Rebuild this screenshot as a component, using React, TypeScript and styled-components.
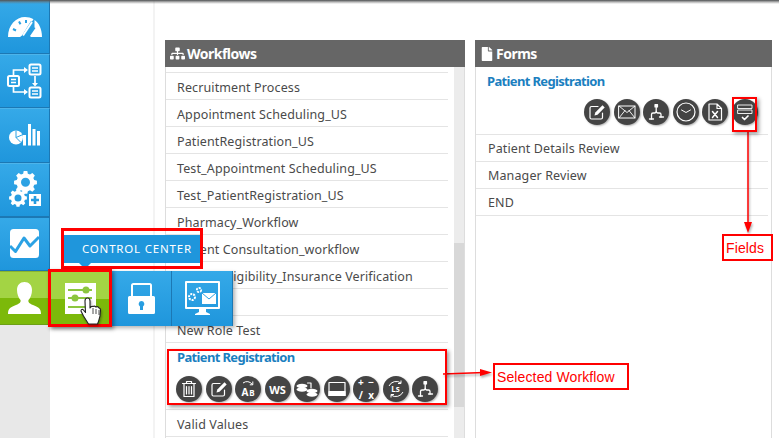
import React from 'react';
import styled, { createGlobalStyle } from 'styled-components';
import { FaSitemap, FaFile } from 'react-icons/fa';

const GlobalStyle = createGlobalStyle`
  html, body { margin: 0; padding: 0; background: #fff; }
  * { box-sizing: border-box; }
`;

const FONT = `"Noto Sans", "Open Sans", sans-serif`;

const workflowRows = [
  'Recruitment Process',
  'Appointment Scheduling_US',
  'PatientRegistration_US',
  'Test_Appointment Scheduling_US',
  'Test_PatientRegistration_US',
  'Pharmacy_Workflow',
  'Patient Consultation_workflow',
  'Patient Eligibility_Insurance Verification',
  'Test Role',
  'New Role Test',
];

const formRows = ['Patient Details Review', 'Manager Review', 'END'];

const Glyph = ({ children }: { children: React.ReactNode }) => (
  <svg width="26" height="26" viewBox="0 0 26 26" fill="none" stroke="#fff" strokeWidth="1.2" strokeLinecap="round" strokeLinejoin="round">
    {children}
  </svg>
);

const TrashGlyph = () => (
  <Glyph>
    <path d="M6.5 7.500h13M10.500 7.500V5.500h5v2M8 8v12.500h10V8M10.500 10.500v7.500M13 10.500v7.500M15.500 10.500v7.500" />
  </Glyph>
);
const EditGlyph = () => (
  <Glyph>
    <path d="M18.500 14v4.500q0 1.500-1.500 1.500H7.500Q6 20 6 18.500V9q0-1.500 1.500-1.500H14" />
    <path d="M10.500 16.500l.8-3 7.200-7.200 2.200 2.200-7.200 7.200z" fill="#fff" stroke="none" />
  </Glyph>
);
const FlowGlyph = () => (
  <Glyph>
    <rect x="12" y="5.500" width="2.500" height="2.500" fill="#fff" />
    <path d="M13.200 8v3.500M8.500 20v-4.500q0-1.500 1.500-1.500h1.500q1.700 0 1.700-2.500 0 2.500 1.700 2.500h1.600q1.500 0 1.500 1.500V18" strokeWidth="1.300" />
    <path d="M6.500 20h4M16.500 18h4" strokeWidth="1.300" />
  </Glyph>
);
const DataGlyph = () => (
  <Glyph>
    <ellipse cx="8" cy="10" rx="5.500" ry="2.200" fill="#fff" stroke="none" />
    <ellipse cx="8" cy="13.500" rx="5.500" ry="2.200" fill="#fff" stroke="none" />
    <ellipse cx="18" cy="15" rx="5.500" ry="2.200" fill="#fff" stroke="none" />
    <ellipse cx="18" cy="18.500" rx="5.500" ry="2.200" fill="#fff" stroke="none" />
    <path d="M13.500 7h3.500v5" />
  </Glyph>
);
const PanelGlyph = () => (
  <Glyph>
    <rect x="5" y="6.500" width="16" height="13" stroke="#fff" />
    <rect x="5" y="15.500" width="16" height="4" fill="#fff" />
  </Glyph>
);
const MailGlyph = () => (
  <Glyph>
    <rect x="5" y="7" width="16" height="12" strokeWidth="1" />
    <path d="M5 7l8 6.500L21 7M5 19l6-7.500M21 19l-6-7.500" strokeWidth=".9" />
  </Glyph>
);
const ClockGlyph = () => (
  <Glyph>
    <circle cx="13" cy="13" r="9" />
    <path d="M8.500 11l4.500 2.500 4.500-2.500" strokeWidth="1" />
  </Glyph>
);
const ExcelGlyph = () => (
  <Glyph>
    <path d="M7 5h8l4.500 4.500V21H7zM15 5v4.500h4.500" />
    <path d="M10.500 12.500l5 6M15.500 12.500l-5 6" strokeWidth="1.500" />
  </Glyph>
);
const FieldsGlyph = () => (
  <Glyph>
    <rect x="6" y="6" width="14" height="3.500" strokeWidth=".9" />
    <rect x="6" y="11" width="14" height="3.500" strokeWidth=".9" />
    <path d="M10.500 18.500l2 2 3.500-3.500" strokeWidth="1.700" />
  </Glyph>
);
const RefreshRing = () => (
  <RingSvg width="26" height="26" viewBox="0 0 26 26" fill="none" stroke="#fff" strokeWidth="1">
    <path d="M6 10a8 8 0 0 1 12-3M20 16a8 8 0 0 1-12 3" />
    <path d="M18 4.500V7.500H15M8 21.500V18.500h3" />
  </RingSvg>
);
const SwapArc = () => (
  <RingSvg width="26" height="26" viewBox="0 0 26 26" fill="none" stroke="#fff" strokeWidth="1">
    <path d="M8 7q5-3.500 9.500 1.500M17.800 5.500v3.300h-3" />
  </RingSvg>
);

const RingSvg = styled.svg`
  position: absolute;
  left: 0;
  top: 0;
`;

const Scene = styled.div`
  position: relative;
  display: flex;
  width: 779px;
  height: 438px;
  overflow: hidden;
  background: #fff;
  font-family: ${FONT};
`;

const TopShade = styled.div`
  position: absolute;
  top: 0;
  left: 0;
  right: 0;
  height: 4px;
  background: linear-gradient(#4d5052, rgba(110, 110, 110, 0.5) 50%, rgba(255, 255, 255, 0));
  z-index: 5;
`;

const Sidebar = styled.nav`
  display: flex;
  flex-direction: column;
  width: 50px;
  flex: none;
  background: #e8e8e8;
`;

const Tile = styled.div<{ $green?: boolean; $active?: boolean }>`
  display: flex;
  align-items: center;
  justify-content: center;
  width: 50px;
  height: 54.2px;
  flex: none;
  border-right: 1px solid ${(p) => (p.$green ? '#6c9f16' : '#1c78b4')};
  border-bottom: 1px solid ${(p) => (p.$green ? '#6c9f16' : '#1c78b4')};
  border-top: 1px solid ${(p) => (p.$green ? '#8ab52e' : p.$active ? '#1c78b4' : '#4db4ea')};
  background: ${(p) =>
    p.$green
      ? 'linear-gradient(#a3d444 0, #a3d444 50%, #7cb90a 50%, #7cb90a 100%)'
      : 'linear-gradient(#35a9e8, #1f96dc)'};
`;

const Rail = styled.div`
  width: 105px;
  flex: none;
  border-right: 2px solid #f3f3f3;
`;

const Content = styled.main`
  display: flex;
  gap: 10px;
  padding: 40px 0 0 10px;
  flex: 1;
  min-width: 0;
`;

const Panel = styled.section<{ $width: number }>`
  display: flex;
  flex-direction: column;
  width: ${(p) => p.$width}px;
  flex: none;
  overflow: hidden;
`;

const PanelHeader = styled.header`
  display: flex;
  align-items: center;
  gap: 2px;
  height: 27px;
  flex: none;
  padding-left: 5px;
  background: #666;
  color: #fff;
  font-size: 14px;
  font-weight: 700;
  letter-spacing: -0.5px;
`;

const PanelBody = styled.div`
  display: flex;
  flex: 1;
  min-height: 0;
  border-left: 1px solid #ddd;
  border-right: 1px solid #ddd;
`;

const List = styled.div<{ $inset: number; $pad: number; $rowTop: number }>`
  flex: 1;
  min-width: 0;
  margin-right: ${(p) => p.$inset}px;
  --row-pad: ${(p) => p.$pad}px;
  --row-top: ${(p) => p.$rowTop}px;
`;

const TopGap = styled.div`
  height: 6px;
  border-bottom: 1px solid #e4e4e4;
`;

const Row = styled.div`
  display: flex;
  align-items: center;
  height: 27px;
  padding: var(--row-top) 0 0 var(--row-pad);
  border-bottom: 1px solid #e4e4e4;
  color: #4a4a4a;
  font-size: 12.5px;
  letter-spacing: 0.12px;
  white-space: nowrap;
`;

const SelectedRow = styled.div`
  height: 67px;
  padding: 5px 0 0 11px;
  border-bottom: 1px solid #e4e4e4;
`;

const FormHead = styled.div`
  height: 68px;
  padding: 5px 0 0 11px;
  border-bottom: 1px solid #e4e4e4;
`;

const Title = styled.div`
  color: #1b80bf;
  font-size: 13px;
  font-weight: 700;
  letter-spacing: -0.65px;
  line-height: 19px;
`;

const IconRow = styled.div<{ $end?: boolean }>`
  display: flex;
  gap: 3.5px;
  margin-top: ${(p) => (p.$end ? 8 : 9)}px;
  margin-left: ${(p) => (p.$end ? 97 : -1)}px;
`;

const RoundIcon = styled.span`
  position: relative;
  display: flex;
  flex-wrap: wrap;
  align-items: center;
  justify-content: center;
  width: 26px;
  height: 26px;
  flex: none;
  border-radius: 50%;
  background: #444;
  color: #fff;
  font-size: 11px;
  font-weight: 700;
  line-height: 1;
  box-shadow: 1px 1px 2px rgba(0, 0, 0, 0.3);
`;

const SmallMark = styled.span`
  font-size: 8px;
  font-weight: 700;
`;

const LetterPair = styled.span`
  display: flex;
  align-items: flex-end;
  gap: 1px;
  margin-top: 5px;
  font-size: 10px;
`;

const MathCell = styled.span`
  width: 10.500px;
  text-align: center;
  font-size: 10px;
  line-height: 9px;
`;

const Scrollbar = styled.div`
  display: flex;
  flex-direction: column;
  width: 10px;
  flex: none;
  background: #ececec;
`;

const ScrollThumb = styled.div`
  width: 100%;
  height: 164px;
  margin-top: 176px;
  background: #d8d8d8;
`;

const Flyout = styled.div`
  position: absolute;
  left: 50px;
  top: 271px;
  display: flex;
  height: 55px;
  box-shadow: 2px 2px 4px rgba(0, 0, 0, 0.3);
  z-index: 6;
`;

const FlyTile = styled.div<{ $green?: boolean; $width: number }>`
  display: flex;
  align-items: center;
  justify-content: center;
  position: relative;
  width: ${(p) => p.$width}px;
  background: ${(p) =>
    p.$green
      ? 'linear-gradient(#a3d444 0, #a3d444 50%, #7cb90a 50%, #7cb90a 100%)'
      : 'linear-gradient(#35a9e8, #1f96dc)'};
  border-right: 1px solid ${(p) => (p.$green ? '#6c9f16' : '#1c78b4')};
`;

const Tooltip = styled.div`
  position: absolute;
  left: 62px;
  top: 235px;
  width: 141px;
  height: 28px;
  padding-left: 20px;
  background: #1f96dc;
  color: #fff;
  font-size: 11.5px;
  letter-spacing: 0.8px;
  line-height: 28px;
  white-space: nowrap;
  z-index: 6;
  &::after {
    content: '';
    position: absolute;
    left: 17px;
    bottom: -6px;
    border-left: 6px solid transparent;
    border-right: 6px solid transparent;
    border-top: 6px solid #1f96dc;
  }
`;

const RedBox = styled.div<{ $x: number; $y: number; $w: number; $h: number; $shadow?: boolean }>`
  position: absolute;
  left: ${(p) => p.$x}px;
  top: ${(p) => p.$y}px;
  width: ${(p) => p.$w}px;
  height: ${(p) => p.$h}px;
  border: 2px solid #f00;
  ${(p) => (p.$shadow ? 'box-shadow: 2px 2px 4px rgba(0,0,0,.4);' : '')}
  z-index: 8;
`;

const ThickBox = styled(RedBox)`
  border-width: 3px;
`;

const Label = styled(RedBox)`
  display: flex;
  align-items: center;
  padding-left: 2px;
  background: #fff;
  color: #f00;
  font-family: "Liberation Sans", Arial, sans-serif;
  font-size: 14px;
  letter-spacing: 0.12px;
  white-space: nowrap;
`;

const ArrowLayer = styled.svg<{ $top?: boolean }>`
  position: absolute;
  left: 0;
  top: 0;
  z-index: ${(p) => (p.$top ? 9 : 7)};
  pointer-events: none;
  filter: drop-shadow(1px 2px 1px rgba(0, 0, 0, 0.3));
`;

const App = () => {
  return (
    <Scene>
      <GlobalStyle />
      <TopShade />
      <Sidebar>
        <Tile>
          <svg width="34" height="22" viewBox="0 0 34 22" fill="#fff">
            <path d="M0 21C0 9 8 1 17 1c3 0 6 .8 8.500 2.300L22 8.500l-8 11-2 1.500H0z M26.500 4C31 7 34 13 34 21H23l-1-1 5.500-8-1-.5z" />
            <path d="M23 5l-9 14.500 1.700 1.500L26 8z" fill="#2ba2e4" />
            <path d="M24 6L15 19.500" stroke="#fff" strokeWidth="2" />
            <path d="M5 13l3 1.500M11 5.500l1.500 2.700M18 4v3" stroke="#2ba2e4" strokeWidth="2" />
          </svg>
        </Tile>
        <Tile>
          <svg width="36" height="36" viewBox="0 0 36 36" fill="none" stroke="#fff" strokeWidth="1.500">
            <rect x="22.500" y="1.500" width="11" height="10" rx="1.500" strokeWidth="2" />
            <rect x="22.500" y="24.500" width="11" height="10" rx="1.500" strokeWidth="2" />
            <rect x="1" y="13" width="11" height="10" rx="1.500" strokeWidth="2" />
            <path d="M25 5h6M25 8h6M25 28h6M25 31h6M4 16.500h5M4 19.500h5" />
            <path d="M6.500 12V7H18M6.500 23v6H18M28 13v8" strokeWidth="1.700" />
            <path d="M17 4l4 3-4 3zM17 26l4 3-4 3zM25 20l3 3.500 3-3.500z" fill="#fff" stroke="none" />
          </svg>
        </Tile>
        <Tile>
          <svg width="32" height="24" viewBox="0 0 32 24" fill="#fff">
            <circle cx="7" cy="14.500" r="7" />
            <path d="M7 14.500l7-3M7 14.500l5 5M7 14.500v-7" stroke="#2ba2e4" strokeWidth="1" />
            <path d="M15 12h3v10.500h-3zM20 1h3v21.500h-3zM24.500 6h3v16.500h-3zM29 8h3v14.500h-3z" transform="translate(-1 0)" />
          </svg>
        </Tile>
        <Tile>
          <svg width="32" height="38" viewBox="0 0 32 38" fill="#fff">
            <path fillRule="evenodd" d="M13 0h4l.6 3 2.400 1 2.600-1.700 2.800 2.800-1.700 2.600 1 2.400 3 .6v4l-3 .6-1 2.400 1.700 2.600-2.800 2.800-2.600-1.700-2.400 1-.6 3h-4l-.6-3-2.400-1-2.600 1.700-2.800-2.800 1.700-2.600-1-2.400-3-.6v-4l3-.6 1-2.400-1.700-2.600 2.800-2.800 2.600 1.700 2.400-1zM15 7.500a5 5 0 100 10 5 5 0 000-10z" transform="translate(3 0) scale(.9)" />
            <path fillRule="evenodd" d="M7.500 20h3l.4 2 1.600.7 1.800-1.100 2 2-1.100 1.800.7 1.600 2 .4v3l-2 .4-.7 1.600 1.100 1.800-2 2-1.800-1.100-1.600.7-.4 2h-3l-.4-2-1.600-.7-1.800 1.100-2-2 1.100-1.800-.7-1.600-2-.4v-3l2-.4.7-1.600-1.100-1.800 2-2 1.800 1.100 1.600-.7zM9 25.500a3.500 3.500 0 100 7 3.500 3.500 0 000-7z" transform="translate(0 -2)" />
            <path fillRule="evenodd" d="M20 23h12v12H20zM24.700 25v2.700H22v2.600h2.700V33h2.600v-2.700H30v-2.600h-2.700V25z" />
          </svg>
        </Tile>
        <Tile $active>
          <svg width="29" height="29" viewBox="0 0 29 29">
            <rect width="29" height="29" rx="3.500" fill="#fff" />
            <path d="M0 17l5.500 5.500L14 9l6 8 9-9" fill="none" stroke="#2ba2e4" strokeWidth="3" strokeLinejoin="round" />
          </svg>
        </Tile>
        <Tile $green>
          <svg width="33" height="32" viewBox="0 0 33 32" fill="#fff">
            <path d="M0 32c0-6 3-7 8-9 4-1.500 5-3 4.500-5-2-2-3.500-6-3.500-10C9 3 12 0 16.500 0S24 3 24 8c0 4-1.500 8-3.500 10-.5 2 .5 3.500 4.500 5 5 2 8 3 8 9z" />
          </svg>
        </Tile>
      </Sidebar>
      <Rail />
      <Content>
        <Panel $width={300}>
          <PanelHeader>
            <FaSitemap size={15} />
            Workflows
          </PanelHeader>
          <PanelBody>
            <List $inset={6} $pad={11} $rowTop={2}>
              <TopGap />
              {workflowRows.map((name) => (
                <Row key={name}>{name}</Row>
              ))}
              <SelectedRow>
                <Title>Patient Registration</Title>
                <IconRow>
                  <RoundIcon><TrashGlyph /></RoundIcon>
                  <RoundIcon><EditGlyph /></RoundIcon>
                  <RoundIcon>
                    <SwapArc />
                    <LetterPair>A<SmallMark>B</SmallMark></LetterPair>
                  </RoundIcon>
                  <RoundIcon>WS</RoundIcon>
                  <RoundIcon><DataGlyph /></RoundIcon>
                  <RoundIcon><PanelGlyph /></RoundIcon>
                  <RoundIcon>
                    <MathCell>+</MathCell>
                    <MathCell>−</MathCell>
                    <MathCell>/</MathCell>
                    <MathCell>x</MathCell>
                  </RoundIcon>
                  <RoundIcon>
                    <RefreshRing />
                    <SmallMark>Ls</SmallMark>
                  </RoundIcon>
                  <RoundIcon><FlowGlyph /></RoundIcon>
                </IconRow>
              </SelectedRow>
              <Row>Valid Values</Row>
            </List>
            <Scrollbar>
              <ScrollThumb />
            </Scrollbar>
          </PanelBody>
        </Panel>
        <Panel $width={297}>
          <PanelHeader>
            <FaFile size={14} />
            Forms
          </PanelHeader>
          <PanelBody>
            <List $inset={3} $pad={12} $rowTop={0}>
              <FormHead>
                <Title>Patient Registration</Title>
                <IconRow $end>
                  <RoundIcon><EditGlyph /></RoundIcon>
                  <RoundIcon><MailGlyph /></RoundIcon>
                  <RoundIcon><FlowGlyph /></RoundIcon>
                  <RoundIcon><ClockGlyph /></RoundIcon>
                  <RoundIcon><ExcelGlyph /></RoundIcon>
                  <RoundIcon><FieldsGlyph /></RoundIcon>
                </IconRow>
              </FormHead>
              {formRows.map((name) => (
                <Row key={name}>{name}</Row>
              ))}
            </List>
          </PanelBody>
        </Panel>
      </Content>

      <Flyout>
        <FlyTile $green $width={62}>
          <svg width="31" height="31" viewBox="0 0 31 31">
            <rect width="31" height="31" fill="#fff" />
            <g stroke="#8cc63f" strokeWidth="2" fill="#8cc63f">
              <path d="M3 7h24M3 15h24M3 24h24" />
              <circle cx="21" cy="7" r="2.500" />
              <circle cx="10" cy="15" r="2.500" />
            </g>
          </svg>
        </FlyTile>
        <FlyTile $width={60}>
          <svg width="27" height="31" viewBox="0 0 27 31" fill="#fff">
            <path fillRule="evenodd" d="M3 13V2.500Q3 0 5.500 0h16Q24 0 24 2.500V13h-2V2H5v11zM1.500 13h24Q27 13 27 14.500v15Q27 31 25.500 31h-24Q0 31 0 29.500v-15Q0 13 1.500 13zM13.500 18a3 3 0 00-1.500 5.500V27h3v-3.500A3 3 0 0013.500 18z" />
          </svg>
        </FlyTile>
        <FlyTile $width={61}>
          <svg width="35" height="35" viewBox="0 0 35 35" fill="#fff">
            <path fillRule="evenodd" d="M1 0h33q1 0 1 1v26q0 1-1 1H1q-1 0-1-1V1q0-1 1-1zM2 2v24h31V2z" />
            <path d="M14 28h7v3l4 2v1H10v-1l4-2z" />
            <circle cx="7" cy="16" r="3" fill="none" stroke="#fff" strokeWidth="2" strokeDasharray="2 1" />
            <circle cx="14" cy="9" r="2.200" fill="none" stroke="#fff" strokeWidth="1.800" strokeDasharray="2 1" />
            <rect x="17" y="12" width="14" height="11" />
            <path d="M17 12l7 6 7-6" fill="none" stroke="#2ba2e4" strokeWidth="1" />
          </svg>
        </FlyTile>
      </Flyout>
      <Tooltip>CONTROL CENTER</Tooltip>

      {/* hand cursor sits over the green tile */}
      <ArrowLayer $top width="779" height="438" viewBox="0 0 779 438">
        <path d="M85 301q0-3 2.500-3t2.500 3v7q1-2 3-1.500 1.500-1 3 .5 2-1 3 1 1.500 0 1.500 2.500 0 6-2 11l-1 2.500h-9l-5-8-2.500-5q0-2 2-1.500l2.500 3z" fill="#fff" stroke="#222" strokeWidth="1.100" strokeLinejoin="round" />
        <path d="M93 308v6M96 309v5M99 310v5" stroke="#222" strokeWidth=".8" />
      </ArrowLayer>

      <ArrowLayer width="779" height="438" viewBox="0 0 779 438">
        <path d="M443 374L484 372.500" stroke="#f00" strokeWidth="1.500" />
        <path d="M480 369l12 3.500-12 3.500z" fill="#f00" />
        <path d="M748 132V225" stroke="#f00" strokeWidth="1.500" />
        <path d="M744 222l4 11 4-11z" fill="#f00" />
      </ArrowLayer>

      <ThickBox $x={61} $y={228} $w={142} $h={41} />
      <ThickBox $x={48} $y={269} $w={64} $h={58} $shadow />
      <RedBox $x={167} $y={349} $w={280} $h={56} $shadow />
      <RedBox $x={732} $y={97} $w={25} $h={35} $shadow />
      <Label $x={493} $y={363} $w={136} $h={27}>Selected Workflow</Label>
      <Label $x={722} $y={234} $w={51} $h={27}>Fields</Label>
    </Scene>
  );
};

export default App;
